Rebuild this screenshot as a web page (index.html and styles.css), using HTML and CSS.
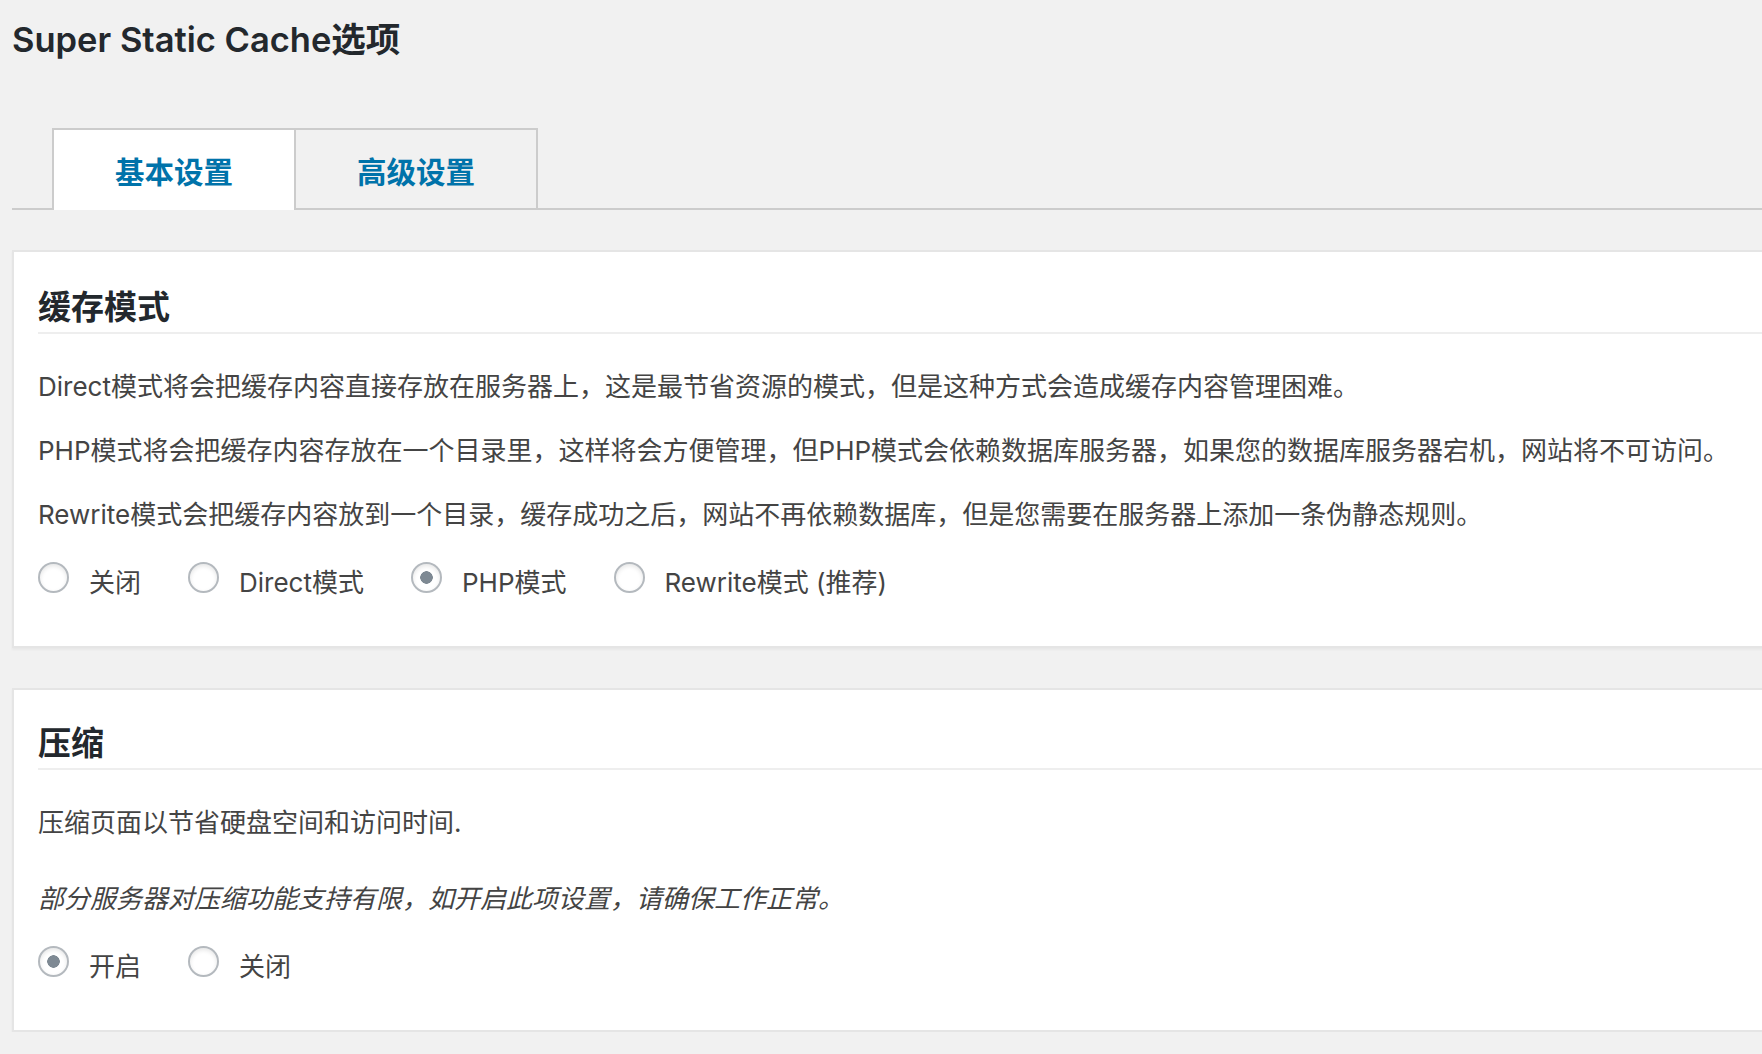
FILE: index.html
```html
<!DOCTYPE html>
<html lang="zh-CN">
<head>
    <meta charset="UTF-8">
    <meta name="viewport" content="width=device-width, initial-scale=1.0">
    <title>Super Static Cache选项</title>
    <link rel="stylesheet" href="styles.css">
</head>
<body>

    <div class="wrap">
        <h1 class="page-title">Super Static Cache选项</h1>

        <!-- Pestañas -->
        <nav class="tabs">
            <a class="tab tab-active" href="#basic">基本设置</a>
            <a class="tab" href="#advanced">高级设置</a>
        </nav>

        <!-- 缓存模式 -->
        <div class="card">
            <h2 class="card-title">缓存模式</h2>
            <div class="card-body">
                <p>Direct模式将会把缓存内容直接存放在服务器上，这是最节省资源的模式，但是这种方式会造成缓存内容管理困难。</p>
                <p>PHP模式将会把缓存内容存放在一个目录里，这样将会方便管理，但PHP模式会依赖数据库服务器，如果您的数据库服务器宕机，网站将不可访问。</p>
                <p>Rewrite模式会把缓存内容放到一个目录，缓存成功之后，网站不再依赖数据库，但是您需要在服务器上添加一条伪静态规则。</p>
                <div class="choices">
                    <label class="choice"><input type="radio" name="cache_mode" value="close"> 关闭</label>
                    <label class="choice"><input type="radio" name="cache_mode" value="direct"> Direct模式</label>
                    <label class="choice"><input type="radio" name="cache_mode" value="phprewrite" checked> PHP模式</label>
                    <label class="choice"><input type="radio" name="cache_mode" value="serverrewrite"> Rewrite模式 (推荐)</label>
                </div>
            </div>
        </div>

        <!-- 压缩 -->
        <div class="card">
            <h2 class="card-title">压缩</h2>
            <div class="card-body">
                <p>压缩页面以节省硬盘空间和访问时间.</p>
                <p class="note">部分服务器对压缩功能支持有限，如开启此项设置，请确保工作正常。</p>
                <div class="choices">
                    <label class="choice"><input type="radio" name="compress" value="1" checked> 开启</label>
                    <label class="choice"><input type="radio" name="compress" value="0"> 关闭</label>
                </div>
            </div>
        </div>
    </div>

</body>
</html>
```

FILE: styles.css
```css
body {
    margin: 0;
    background-color: #f1f1f1;
    color: #444;
    font-family: Inter, "Noto Sans CJK SC", sans-serif;
    font-size: 26px;
    overflow-x: hidden;
}

.wrap {
    padding-left: 12px;
    margin-right: -40px;
}

.page-title {
    margin: 18px 0 0;
    font-size: 34.5px;
    line-height: 44px;
    font-weight: 600;
    color: #23282d;
}

/* Pestañas */
.tabs {
    display: flex;
    margin-top: 66px;
    padding-left: 40px;
    border-bottom: 2px solid #ccc;
}

.tab {
    padding: 22px 61px 16px;
    font-size: 29.5px;
    line-height: 40px;
    font-weight: 600;
    color: #0073aa;
    text-decoration: none;
    border: 2px solid #ccc;
    border-bottom: none;
}

.tab + .tab {
    border-left: none;
}

.tab-active {
    background-color: #fff;
    margin-bottom: -2px;
    padding-bottom: 18px;
}

/* Tarjetas */
.card {
    margin-top: 40px;
    padding: 0 24px 44px;
    background-color: #fff;
    border: 2px solid #e5e5e5;
    box-shadow: 0 2px 2px rgba(0, 0, 0, 0.04);
}

.card-title {
    margin: 0;
    padding: 33px 0 3px;
    font-size: 33px;
    line-height: 44px;
    font-weight: 600;
    color: #23282d;
    border-bottom: 2px solid #eee;
}

.card + .card .card-title {
    padding-top: 31px;
}

.card-body {
    padding-top: 8px;
}

.card-body p {
    margin: 26px 0;
    line-height: 38px;
}

.card-body p.note {
    margin-top: 38px;
    font-style: italic;
}

.choices {
    display: flex;
    gap: 47px;
    margin-top: 30px;
}

.choice {
    display: flex;
    align-items: flex-start;
    line-height: 38px;
}

.choice input {
    appearance: none;
    -webkit-appearance: none;
    width: 31px;
    height: 31px;
    margin: -2px 20px 0 0;
    border: 2px solid #b4b9be;
    border-radius: 50%;
    background: #fff;
    box-shadow: inset 0 2px 4px rgba(0, 0, 0, 0.1);
}

.choice input:checked {
    background: radial-gradient(circle, #7e8993 0 6px, #fff 6.5px);
}
```
